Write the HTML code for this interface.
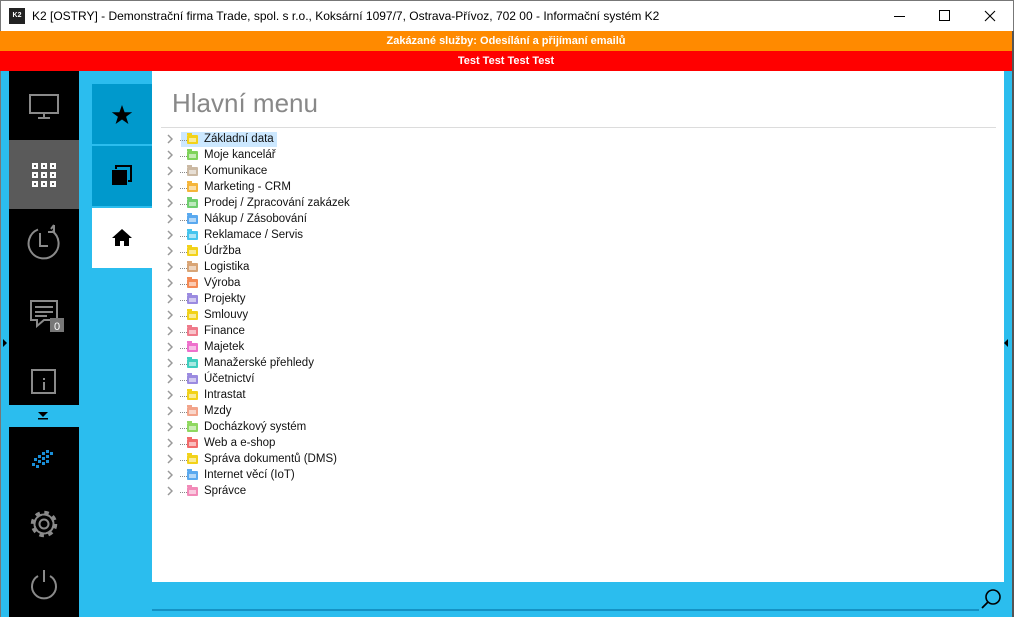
<!DOCTYPE html>
<html><head><meta charset="utf-8"><style>
*{margin:0;padding:0;box-sizing:border-box}
body{width:1014px;height:617px;overflow:hidden;background:#2bbdee;font-family:"Liberation Sans",sans-serif;position:relative}
.abs{position:absolute}
#title{left:0;top:0;width:1014px;height:31px;background:#fff;border-top:1px solid #777;border-left:1px solid #777;border-right:1px solid #777}
#title .t{position:absolute;left:31px;top:8px;font-size:12px;color:#000}
#orange{left:0;top:31px;width:1012px;height:20px;background:#ff8a00;color:#fff;font-size:11px;font-weight:bold;text-align:center;line-height:20px}
#red{left:0;top:51px;width:1012px;height:20px;background:#ff0000;color:#fff;font-size:11px;font-weight:bold;text-align:center;line-height:20px}
.tree{left:161px;top:133px}
.row{position:absolute;left:0;height:16px;width:300px}
.row .ar{position:absolute;left:6px;top:1px}
.row .dots{position:absolute;left:19px;top:7px;width:7px;border-top:1px dotted #888}
.row .f{position:absolute;left:26px;top:2px;width:11px;height:9px;border-radius:1px}
.row .f::before{content:"";position:absolute;left:0;top:-2px;width:5px;height:2px;background:inherit}
.row .f::after{content:"";position:absolute;left:2px;top:3px;width:7px;height:4px;background:rgba(255,255,255,.55)}
.row .tx{position:absolute;left:43px;top:0px;font-size:11.5px;color:#111;white-space:nowrap}
</style></head><body>
<div id="title" class="abs">
 <div class="abs" style="left:8px;top:7px;width:16px;height:16px;background:#222;color:#fff;font-size:7px;font-weight:bold;line-height:16px;text-align:center">K2</div>
 <div class="t">K2 [OSTRY] - Demonstrační firma Trade, spol. s r.o., Koksární 1097/7, Ostrava-Přívoz, 702 00 - Informační systém K2</div>
 <div class="abs" style="left:893px;top:15px;width:11px;border-top:1px solid #000"></div>
 <div class="abs" style="left:938px;top:9px;width:11px;height:11px;border:1px solid #000"></div>
 <svg class="abs" style="left:983px;top:9px" width="12" height="12"><path d="M1 1L11 11M11 1L1 11" stroke="#000" stroke-width="1.1"/></svg>
</div>
<div id="orange" class="abs">Zakázané služby: Odesílání a přijímaní emailů</div>
<div id="red" class="abs">Test Test Test Test</div>
<div class="abs" style="left:0;top:71px;width:1px;height:546px;background:#777"></div>
<div class="abs" style="left:1012px;top:31px;width:2px;height:586px;background:#555"></div>
<div class="abs" style="left:9px;top:71px;width:70px;height:334px;background:#000"></div>
<div class="abs" style="left:9px;top:140px;width:70px;height:69px;background:#5a5a5a"></div>
<div class="abs" style="left:9px;top:427px;width:70px;height:190px;background:#000"></div>
<svg class="abs" style="left:0;top:0" width="80" height="617">
 <g stroke="#8a8a8a" stroke-width="2" fill="none">
  <rect x="30" y="95" width="28" height="18"/><path d="M44 113v4M38 118h12"/>
  <path d="M52 231A15 15 0 1 1 38 229.5"/><path d="M40 233v13h8"/><path d="M51 229l3 -4M54 225v7h-6"/>
  <path d="M31 301h26v19h-13l-7 6v-6h-6z"/><path d="M35 307h18M35 312h18M35 316h12"/>
  <rect x="32" y="370" width="23" height="23"/><path d="M44 378v2M44 382v8"/>
  <circle cx="44" cy="524" r="4.5"/><circle cx="44" cy="524" r="9.5"/>
  <circle cx="44" cy="524" r="11.5" stroke-width="3.5" stroke-dasharray="4.5 4.53"/>
  <path d="M38 576a12 12 0 1 0 12 0M44 570v12"/>
 </g>
 <circle cx="44" cy="524" r="8.5" fill="#000"/><circle cx="44" cy="524" r="4.5" fill="none" stroke="#8a8a8a" stroke-width="2"/>
 <circle cx="44" cy="524" r="9.5" fill="none" stroke="#8a8a8a" stroke-width="2" stroke-dasharray="5 2.46"/>
 <g fill="#fff">
  <rect x="32" y="163" width="6" height="6"/><rect x="41" y="163" width="6" height="6"/><rect x="50" y="163" width="6" height="6"/>
  <rect x="32" y="172" width="6" height="6"/><rect x="41" y="172" width="6" height="6"/><rect x="50" y="172" width="6" height="6"/>
  <rect x="32" y="181" width="6" height="6"/><rect x="41" y="181" width="6" height="6"/><rect x="50" y="181" width="6" height="6"/>
 </g>
 <g fill="#5a5a5a"><rect x="34" y="165" width="2" height="2"/><rect x="43" y="165" width="2" height="2"/><rect x="52" y="165" width="2" height="2"/><rect x="34" y="174" width="2" height="2"/><rect x="43" y="174" width="2" height="2"/><rect x="52" y="174" width="2" height="2"/><rect x="34" y="183" width="2" height="2"/><rect x="43" y="183" width="2" height="2"/><rect x="52" y="183" width="2" height="2"/></g>
 <rect x="50" y="318" width="14" height="14" fill="#777"/><text x="57" y="330" fill="#fff" font-size="11" text-anchor="middle" font-family="Liberation Sans">0</text>
 <path d="M38 412h10l-5 5z" fill="#000"/><rect x="38" y="418" width="10" height="1.5" fill="#000"/>
 <path d="M3 339v8l4 -4z" fill="#000"/>
 <g fill="#1a8fd8"><rect x="34" y="458" width="3" height="3"/><rect x="38" y="455" width="3" height="3"/><rect x="42" y="452" width="3" height="3"/><rect x="46" y="450" width="3" height="3"/><rect x="50" y="452" width="3" height="3"/><rect x="38" y="460" width="3" height="3"/><rect x="42" y="457" width="3" height="3"/><rect x="46" y="455" width="3" height="3"/><rect x="32" y="463" width="3" height="3"/><rect x="36" y="465" width="3" height="3"/><rect x="42" y="462" width="3" height="3"/><rect x="46" y="460" width="3" height="3"/></g>
</svg>
<div class="abs" style="left:92px;top:84px;width:60px;height:60px;background:#0099cc"></div>
<div class="abs" style="left:92px;top:146px;width:60px;height:60px;background:#0099cc"></div>
<div class="abs" style="left:92px;top:208px;width:61px;height:60px;background:#fff"></div>
<svg class="abs" style="left:92px;top:84px" width="60" height="184">
 <path d="M30 21l2.6 7.2h7.6l-6.1 4.5 2.3 7.3-6.4-4.5-6.4 4.5 2.3-7.3-6.1-4.5h7.6z" fill="#000"/>
 <rect x="20" y="86" width="15" height="15" fill="#000"/><path d="M24 85v-3h15v15h-3" stroke="#000" stroke-width="2" fill="none"/>
 <path d="M30 145l-10 9h3v8h5v-5h4v5h5v-8h3z" fill="#000"/>
</svg>
<div class="abs" style="left:152px;top:71px;width:852px;height:511px;background:#fff"></div>
<div class="abs" style="left:172px;top:88px;font-size:26px;color:#888">Hlavní menu</div>
<div class="abs" style="left:161px;top:127px;width:835px;height:1px;background:#dcdcdc"></div>
<div class="abs" style="left:181px;top:132px;width:96px;height:15px;background:#cce8ff"></div>
<div class="abs tree" id="tree"></div>
<div class="abs" style="left:1004px;top:339px;width:0;height:0;border-top:4px solid transparent;border-bottom:4px solid transparent;border-right:4px solid #000"></div>
<div class="abs" style="left:152px;top:609px;width:827px;height:2px;background:#1592c4"></div>
<svg class="abs" style="left:980px;top:588px" width="24" height="24"><circle cx="13" cy="9" r="7" stroke="#000" stroke-width="1.6" fill="none"/><path d="M8 14l-6 6" stroke="#000" stroke-width="1.8"/></svg>
<script>
var items=[["Základní data","#f2d21a"],["Moje kancelář","#7fd35a"],["Komunikace","#cbb9a3"],["Marketing - CRM","#f5b53a"],["Prodej / Zpracování zakázek","#6fcf6f"],["Nákup / Zásobování","#5aa9ef"],["Reklamace / Servis","#45c4ee"],["Údržba","#f2d21a"],["Logistika","#d9a576"],["Výroba","#f58a55"],["Projekty","#9b8be0"],["Smlouvy","#f2d21a"],["Finance","#ef7a8a"],["Majetek","#ee70cc"],["Manažerské přehledy","#3fcfbf"],["Účetnictví","#9b8be0"],["Intrastat","#f2d21a"],["Mzdy","#f2a48a"],["Docházkový systém","#8fd860"],["Web a e-shop","#f26a6a"],["Správa dokumentů (DMS)","#f2d21a"],["Internet věcí (IoT)","#5aa9ef"],["Správce","#f28ab8"]];
var h="";items.forEach(function(it,i){h+='<div class="row" style="top:'+(i*16)+'px"><svg class="ar" width="6" height="10"><path d="M1 1l4 4-4 4" stroke="#999" stroke-width="1.5" fill="none"/></svg><div class="dots"></div><div class="f" style="background:'+it[1]+'"></div><div class="tx">'+it[0]+'</div></div>'});
document.getElementById("tree").innerHTML=h;
</script>
</body></html>
